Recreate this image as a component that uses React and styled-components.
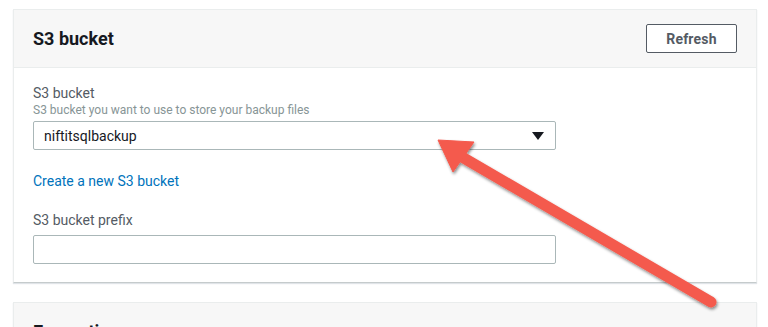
import React from 'react';
import styled, { createGlobalStyle } from 'styled-components';

const GlobalStyle = createGlobalStyle`
  html, body {
    margin: 0;
    padding: 0;
    background: #ffffff;
    font-family: Roboto, "Liberation Sans", Arial, sans-serif;
  }
  #root {
    width: 768px;
    height: 327px;
    overflow: hidden;
  }
`;

const Page = styled.div`
  position: relative;
  width: 768px;
  height: 327px;
  padding: 9px 11px 0 13px;
  box-sizing: border-box;
  display: flex;
  flex-direction: column;
  gap: 19px;
`;

const Card = styled.section`
  background: #ffffff;
  border: 1px solid #eaeded;
  border-bottom-color: #c5cbcc;
  box-shadow: 0 1px 1px rgba(0, 31, 63, 0.12);
  flex-shrink: 0;
`;

const CardHeader = styled.header`
  display: flex;
  align-items: center;
  justify-content: space-between;
  height: 57px;
  padding: 0 19px 0 19px;
  background: #f7f7f7;
  border-bottom: 1px solid #eaeded;
`;

const Title = styled.h2`
  margin: 0;
  font-size: 18px;
  font-weight: 700;
  color: #16191f;
`;

const Button = styled.button`
  width: 91px;
  height: 29px;
  background: #ffffff;
  border: 1px solid #545b64;
  border-radius: 2px;
  font-family: inherit;
  font-size: 14px;
  font-weight: 700;
  color: #545b64;
  letter-spacing: 0.2px;
`;

const CardBody = styled.div`
  display: flex;
  flex-direction: column;
  padding: 16px 19px 18px 19px;
`;

const Field = styled.div`
  display: flex;
  flex-direction: column;
  width: 523px;
`;

const Label = styled.label`
  font-size: 14px;
  color: #545b64;
  line-height: 18px;
`;

const Hint = styled.span`
  font-size: 12px;
  color: #879596;
  line-height: 16px;
  margin-bottom: 3px;
`;

const SelectBox = styled.div`
  display: flex;
  align-items: center;
  justify-content: space-between;
  height: 27px;
  padding: 0 11px 0 10px;
  border: 1px solid #aab7b8;
  border-radius: 2px;
  font-size: 14px;
  color: #16191f;
  margin-top: ${({ $gap }) => $gap || 0}px;
`;

const Caret = styled.span`
  width: 0;
  height: 0;
  border-left: 6px solid transparent;
  border-right: 6px solid transparent;
  border-top: 8px solid #16191f;
`;

const TextLink = styled.a`
  margin: 22px 0 21px;
  font-size: 14px;
  color: #0073bb;
  text-decoration: none;
  line-height: 18px;
`;

const Arrow = styled.svg`
  position: absolute;
  left: 0;
  top: 0;
  pointer-events: none;
`;

const App = () => (
  <Page>
    <GlobalStyle />
    <Card>
      <CardHeader>
        <Title>S3 bucket</Title>
        <Button>Refresh</Button>
      </CardHeader>
      <CardBody>
        <Field>
          <Label>S3 bucket</Label>
          <Hint>S3 bucket you want to use to store your backup files</Hint>
          <SelectBox>
            niftitsqlbackup
            <Caret />
          </SelectBox>
        </Field>
        <TextLink href="#">Create a new S3 bucket</TextLink>
        <Field>
          <Label>S3 bucket prefix</Label>
          <SelectBox $gap={6} />
        </Field>
      </CardBody>
    </Card>
    <Card>
      <CardHeader>
        <Title>Encryption</Title>
      </CardHeader>
    </Card>
    <Arrow width="768" height="327" viewBox="0 0 768 327">
      <defs>
        <filter id="shadow" x="-10%" y="-10%" width="120%" height="120%">
          <feDropShadow dx="1" dy="2" stdDeviation="1.5" floodColor="#000" floodOpacity="0.45" />
        </filter>
      </defs>
      <g filter="url(#shadow)" fill="#f45a4d" stroke="#f45a4d">
        <line x1="711" y1="302" x2="462" y2="157" strokeWidth="11" strokeLinecap="round" />
        <polygon points="438,140 474,142 453,172" strokeWidth="1" strokeLinejoin="round" />
      </g>
    </Arrow>
  </Page>
);

export default App;
